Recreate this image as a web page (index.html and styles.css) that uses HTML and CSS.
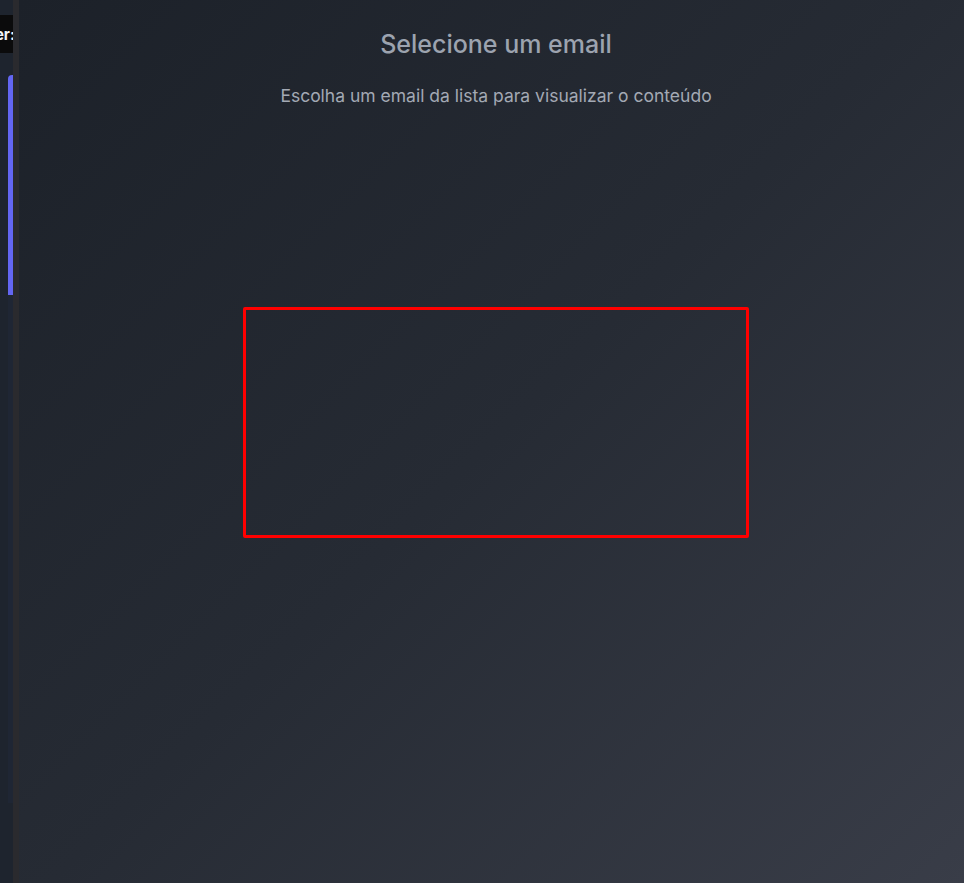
FILE: index.html
```html
<!DOCTYPE html>
<html lang="pt">
<head>
<meta charset="utf-8">
<title>Selecione um email</title>
<link rel="stylesheet" href="styles.css">
</head>
<body>
<div class="app">
  <aside class="sidebar">
    <div class="label"><span>Filter:</span></div>
    <div class="list">
      <div class="item active"></div>
      <div class="item rest"></div>
    </div>
  </aside>
  <div class="divider"></div>
  <main class="main">
    <div class="content">
      <h1 class="title">Selecione um email</h1>
      <p class="subtitle">Escolha um email da lista para visualizar o conteúdo</p>
      <div class="frame"></div>
    </div>
  </main>
</div>
</body>
</html>
```
FILE: styles.css
```css
html, body {
  margin: 0;
  padding: 0;
  height: 100%;
  background: #1e232b;
  font-family: Inter, "Noto Sans", sans-serif;
}
.app {
  display: flex;
  height: 883px;
  overflow: hidden;
}
.sidebar {
  width: 13px;
  flex: none;
  background: #1e242e;
  display: flex;
  flex-direction: column;
  overflow: hidden;
  padding-top: 15px;
  box-sizing: border-box;
}
.label {
  height: 38px;
  background: #0b0b0c;
  display: flex;
  align-items: center;
  justify-content: flex-end;
  overflow: hidden;
}
.label span {
  color: #f3f4f6;
  font-weight: 700;
  font-size: 15px;
  white-space: nowrap;
  margin-right: -2px;
}
.list {
  margin-top: 22px;
  display: flex;
  flex-direction: column;
  padding-left: 8px;
}
.item.active {
  height: 220px;
  background: #6366f1;
  border-radius: 4px 0 0 0;
}
.item.rest {
  height: 508px;
  background: #1f2634;
}
.divider {
  width: 6px;
  flex: none;
  background: #2a2a2e;
}
.main {
  flex: 1;
  background: linear-gradient(135deg, #1c2129 0%, #262b34 50%, #393d48 100%);
  padding-left: 9px;
}
.content {
  display: flex;
  flex-direction: column;
  align-items: center;
  padding-top: 29px;
}
.title {
  margin: 0;
  font-size: 25px;
  font-weight: 500;
  line-height: 31px;
  color: #9ca3af;
}
.subtitle {
  margin: 25px 0 0;
  font-size: 17.5px;
  line-height: 22px;
  color: #a3a9b4;
}
.frame {
  margin-top: 200px;
  width: 500px;
  height: 225px;
  border: 3px solid #ff0000;
  border-radius: 2px;
}
```
